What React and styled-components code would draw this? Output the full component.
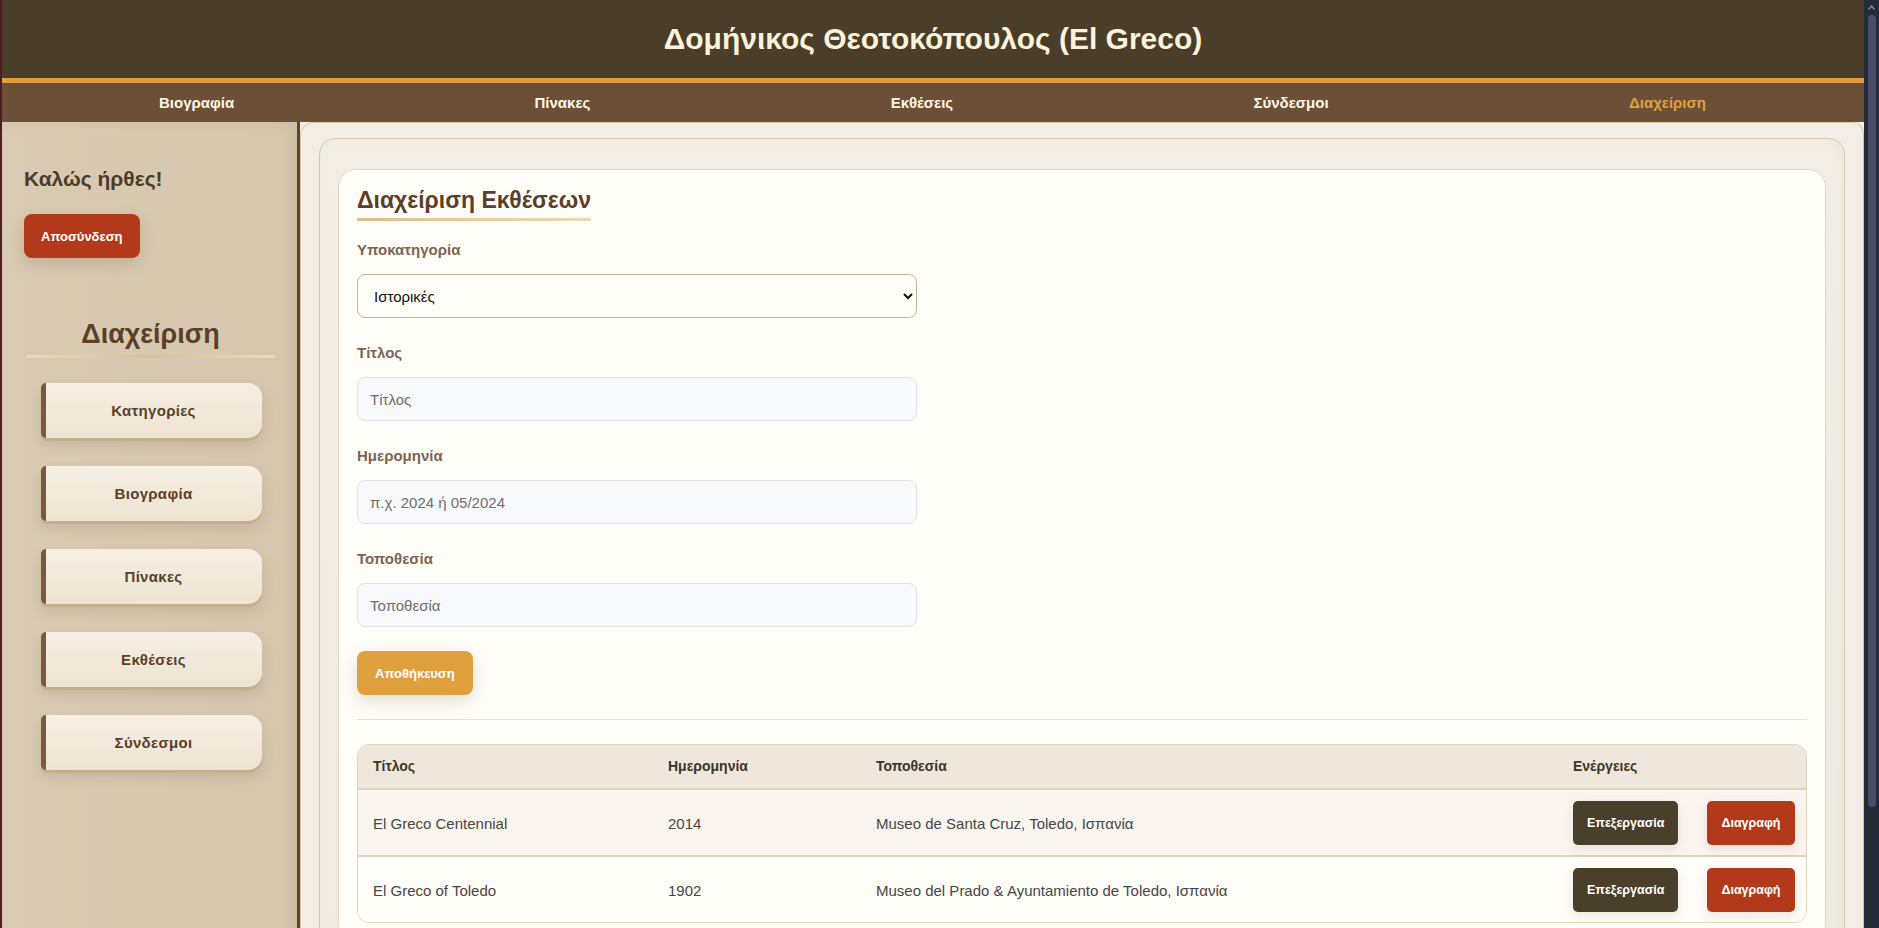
import React from 'react';
import styled, { createGlobalStyle } from 'styled-components';

const GlobalStyle = createGlobalStyle`
  html {
    background: #f3eee5;
  }
  body {
    margin: 0;
    font-family: "Liberation Sans", Arial, sans-serif;
    background: #f3eee5;
  }
  * {
    box-sizing: border-box;
  }
`;

const Page = styled.div`
  margin-right: 15px;
  border-left: 2px solid #4d1c25;
  min-height: 1050px;
  display: flex;
  flex-direction: column;
`;

// drawn stand-in for the dark browser scrollbar seen in the screenshot
const ScrollTrack = styled.div`
  position: fixed;
  top: 0;
  right: 0;
  bottom: 0;
  width: 15px;
  background: #252a37;
  display: flex;
  flex-direction: column;
  align-items: center;
`;

const ScrollArrow = styled.div`
  height: 15px;
  display: flex;
  align-items: center;
  justify-content: center;
`;

const ScrollThumb = styled.div`
  width: 8px;
  height: 792px;
  border-radius: 4px;
  background: #4a4d6a;
`;

const Header = styled.header`
  height: 83px;
  background: #4a3d29;
  border-bottom: 5px solid #e09f3e;
  display: flex;
  align-items: center;
  justify-content: center;
`;

const Title = styled.h1`
  margin: 0;
  color: #fdf3dc;
  font-size: 30px;
  font-weight: 700;
`;

const Nav = styled.nav`
  height: 39px;
  background: #6b4f36;
  display: flex;
  align-items: center;
  justify-content: space-between;
  padding: 0 158px 0 157px;
`;

const NavLink = styled.a`
  color: ${p => (p.$active ? '#e0a03e' : '#fff7e6')};
  font-size: 15px;
  font-weight: 700;
  text-decoration: none;
`;

const Body = styled.div`
  flex: 1;
  display: flex;
`;

const Sidebar = styled.aside`
  width: 298px;
  flex-shrink: 0;
  background: linear-gradient(90deg, #d9cab3 0%, #d6c6ad 100%);
  border-right: 3px solid #5a4531;
  box-shadow: inset -6px 0 12px rgba(90, 69, 49, 0.08);
  padding: 44px 22px 0 22px;
  display: flex;
  flex-direction: column;
`;

const Greeting = styled.h2`
  margin: 0;
  font-size: 21px;
  line-height: 26px;
  font-weight: 700;
  color: #4a3d29;
`;

const LogoutButton = styled.button`
  margin-top: 22px;
  align-self: flex-start;
  height: 44px;
  padding: 0 17px;
  border: none;
  border-radius: 8px;
  background: #b23a1a;
  color: #fff;
  font-family: inherit;
  font-size: 13px;
  font-weight: 700;
  box-shadow: 0 6px 16px rgba(90, 60, 30, 0.18);
`;

const SideHeading = styled.h3`
  margin: 61px 0 0 2px;
  text-align: center;
  font-size: 27px;
  line-height: 30px;
  font-weight: 700;
  color: #5a3f2a;
  padding-bottom: 6px;
  border-bottom: 3px solid transparent;
  border-image: linear-gradient(90deg, #eadbc0, #d9bf8f 50%, #eadbc0) 1;
`;

const SideMenu = styled.div`
  margin-top: 25px;
  padding-left: 3px;
  display: flex;
  flex-direction: column;
  align-items: center;
  gap: 28px;
`;

const SideButton = styled.button`
  width: 221px;
  height: 55px;
  border: none;
  border-left: 5px solid #7a5a3e;
  border-radius: 5px 14px 14px 5px;
  background: linear-gradient(180deg, #f6efe3 0%, #eee3d1 100%);
  color: #5a3f2a;
  font-family: inherit;
  font-size: 15px;
  font-weight: 700;
  letter-spacing: 0.3px;
  box-shadow: 0 3px 0 #c3ae8d, 0 7px 14px rgba(90, 69, 49, 0.15);
`;

const Main = styled.main`
  flex: 1;
  min-width: 0;
  background: #f3eee5;
  border: 1px solid #d6c6a6;
  border-bottom: none;
  border-radius: 14px 12px 0 0;
  padding: 15px 18px 88px;
`;

const OuterCard = styled.section`
  background: linear-gradient(180deg, #f3eee5 0%, #f0ebe1 100%);
  border: 1px solid #d9c8a8;
  border-radius: 16px;
  padding: 30px 18px 18px;
  box-shadow: inset -4px 0 10px rgba(120, 100, 70, 0.05);
`;

const Card = styled.div`
  background: #fffdf8;
  border: 1px solid #e2d6c1;
  border-radius: 18px;
  padding: 17px 18px 19px;
`;

const CardTitle = styled.h2`
  display: inline-block;
  margin: 0 0 19px;
  font-size: 23px;
  line-height: 27px;
  font-weight: 700;
  color: #5a3f2a;
  padding-bottom: 4px;
  border-bottom: 3px solid transparent;
  border-image: linear-gradient(90deg, #d9bf8f, #e6cfa5 60%, #ead8b6) 1;
`;

const Field = styled.div`
  width: 560px;
  margin-bottom: 25px;
`;

const Label = styled.label`
  display: block;
  font-size: 15px;
  line-height: 20px;
  font-weight: 700;
  color: #7a6552;
  margin-bottom: 14px;
`;

const Select = styled.select`
  width: 100%;
  height: 44px;
  padding: 0 12px;
  border: 1px solid #c9b38e;
  border-radius: 8px;
  background: #fffdf8;
  font-family: inherit;
  font-size: 15px;
  color: #111;
`;

const Input = styled.input`
  width: 100%;
  height: 44px;
  padding: 0 12px;
  border: 1px solid #dfe1e4;
  border-radius: 8px;
  background: #f8f9fb;
  font-family: inherit;
  font-size: 15px;
  color: #222;

  &::placeholder {
    color: #6f6f6f;
  }
`;

const SaveButton = styled.button`
  display: block;
  margin-top: -1px;
  height: 44px;
  padding: 0 18px;
  border: none;
  border-radius: 8px;
  background: #e0a03e;
  color: #fff;
  font-family: inherit;
  font-size: 13px;
  font-weight: 700;
  box-shadow: 0 6px 16px rgba(120, 90, 50, 0.18);
`;

const Divider = styled.hr`
  border: none;
  border-top: 1px solid #e6e1d8;
  margin: 24px 0;
`;

const TableWrap = styled.div`
  border: 1px solid #e0d4bd;
  border-radius: 12px;
  overflow: hidden;
`;

const Table = styled.table`
  width: 100%;
  border-collapse: collapse;
  table-layout: fixed;
`;

const Th = styled.th`
  text-align: left;
  background: #efe7db;
  color: #3d3529;
  font-size: 14px;
  line-height: 17px;
  font-weight: 700;
  padding: 13px 15px;
  border-bottom: 2px solid #e0d4bd;
`;

const Row = styled.tr`
  background: ${p => (p.$alt ? '#fffdf8' : '#faf6ef')};
`;

const Td = styled.td`
  padding: 11px 15px 10px;
  font-size: 15px;
  color: #464646;
  border-bottom: ${p => (p.$last ? 'none' : '2px solid #e0d4bd')};
`;

const Actions = styled.div`
  display: flex;
  gap: 29px;
`;

const ActionButton = styled.button`
  height: 44px;
  padding: 0 14px;
  border: none;
  border-radius: 5px;
  background: ${p => (p.$danger ? '#b23a1a' : '#4a3f2a')};
  color: #fff;
  font-family: inherit;
  font-size: 12.5px;
  font-weight: 700;
  box-shadow: 0 4px 12px rgba(90, 69, 49, 0.12);
`;

const navItems = ['Βιογραφία', 'Πίνακες', 'Εκθέσεις', 'Σύνδεσμοι', 'Διαχείριση'];
const sideItems = ['Κατηγορίες', 'Βιογραφία', 'Πίνακες', 'Εκθέσεις', 'Σύνδεσμοι'];

const exhibitions = [
  { title: 'El Greco Centennial', date: '2014', place: 'Museo de Santa Cruz, Toledo, Ισπανία' },
  { title: 'El Greco of Toledo', date: '1902', place: 'Museo del Prado & Ayuntamiento de Toledo, Ισπανία' },
];

const Chevron = ({ up }) => (
  <svg width="7" height="5" viewBox="0 0 7 5">
    <path d={up ? 'M0.5 4.5 L3.5 1 L6.5 4.5' : 'M0.5 0.5 L3.5 4 L6.5 0.5'} fill="none" stroke="#8a8da3" strokeWidth="1.2" />
  </svg>
);

export default function App() {
  return (
    <>
      <GlobalStyle />
      <Page>
        <Header>
          <Title>Δομήνικος Θεοτοκόπουλος (El Greco)</Title>
        </Header>
        <Nav>
          {navItems.map(item => (
            <NavLink key={item} href="#" $active={item === 'Διαχείριση'}>
              {item}
            </NavLink>
          ))}
        </Nav>
        <Body>
          <Sidebar>
            <Greeting>Καλώς ήρθες!</Greeting>
            <LogoutButton>Αποσύνδεση</LogoutButton>
            <SideHeading>Διαχείριση</SideHeading>
            <SideMenu>
              {sideItems.map(item => (
                <SideButton key={item}>{item}</SideButton>
              ))}
            </SideMenu>
          </Sidebar>
          <Main>
            <OuterCard>
              <Card>
                <CardTitle>Διαχείριση Εκθέσεων</CardTitle>
                <Field>
                  <Label>Υποκατηγορία</Label>
                  <Select defaultValue="hist">
                    <option value="hist">Ιστορικές</option>
                  </Select>
                </Field>
                <Field>
                  <Label>Τίτλος</Label>
                  <Input placeholder="Τίτλος" />
                </Field>
                <Field>
                  <Label>Ημερομηνία</Label>
                  <Input placeholder="π.χ. 2024 ή 05/2024" />
                </Field>
                <Field>
                  <Label>Τοποθεσία</Label>
                  <Input placeholder="Τοποθεσία" />
                </Field>
                <SaveButton>Αποθήκευση</SaveButton>
                <Divider />
                <TableWrap>
                  <Table>
                    <colgroup>
                      <col style={{ width: 295 }} />
                      <col style={{ width: 208 }} />
                      <col />
                      <col style={{ width: 248 }} />
                    </colgroup>
                    <thead>
                      <tr>
                        <Th>Τίτλος</Th>
                        <Th>Ημερομηνία</Th>
                        <Th>Τοποθεσία</Th>
                        <Th>Ενέργειες</Th>
                      </tr>
                    </thead>
                    <tbody>
                      {exhibitions.map((ex, i) => {
                        const last = i === exhibitions.length - 1;
                        return (
                          <Row key={ex.title} $alt={i % 2 === 1}>
                            <Td $last={last}>{ex.title}</Td>
                            <Td $last={last}>{ex.date}</Td>
                            <Td $last={last}>{ex.place}</Td>
                            <Td $last={last}>
                              <Actions>
                                <ActionButton>Επεξεργασία</ActionButton>
                                <ActionButton $danger>Διαγραφή</ActionButton>
                              </Actions>
                            </Td>
                          </Row>
                        );
                      })}
                    </tbody>
                  </Table>
                </TableWrap>
              </Card>
            </OuterCard>
          </Main>
        </Body>
      </Page>
      <ScrollTrack>
        <ScrollArrow>
          <Chevron up />
        </ScrollArrow>
        <ScrollThumb />
      </ScrollTrack>
    </>
  );
}
